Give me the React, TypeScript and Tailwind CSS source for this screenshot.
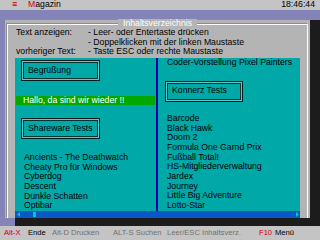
// Inhaltsverzeichnis screen of the disk magazine viewer, DOS text-mode look.
const LEFT_LIST = [
  "Ancients - The Deathwatch",
  "Cheaty Pro für Windows",
  "Cyberdog",
  "Descent",
  "Dunkle Schatten",
  "Optibar",
];

const RIGHT_LIST = [
  "Barcode",
  "Black Hawk",
  "Doom 2",
  "Formula One Garnd Prix",
  "Fußball Total!",
  "HS-Mitgliederverwaltung",
  "Jardex",
  "Journey",
  "Little Big Adventure",
  "Lotto-Star",
];

function TextButton({ label, className = "" }: { label: string; className?: string }) {
  return (
    <div
      className={`flex h-[21px] items-center border border-[#041c1c] pl-[6px] text-black shadow-[inset_0_0_0_1px_#5cc8c8,inset_0_0_0_2px_#083434] ${className}`}
    >
      {label}
    </div>
  );
}

function ScrollBar() {
  return (
    <div className="mx-[7px] flex h-[7px] items-center bg-[#0858c8]">
      <svg width="3" height="5" viewBox="0 0 3 5" className="ml-[2px]">
        <path d="M3 0 L0 2.5 L3 5 Z" fill="#00c8c8" />
      </svg>
      <div className="ml-[13px] h-[5px] w-[3px] bg-[#00c8c8]" />
      <div className="flex-1" />
      <svg width="3" height="5" viewBox="0 0 3 5" className="mr-[1px]">
        <path d="M0 0 L3 2.5 L0 5 Z" fill="#00c8c8" />
      </svg>
    </div>
  );
}

export default function App() {
  return (
    <div className="flex h-[240px] w-[320px] flex-col overflow-hidden font-['Liberation_Sans',Arial,sans-serif] text-[8.7px] leading-[9.65px] text-black">
      {/* menu line */}
      <div className="flex h-[10px] items-center bg-[#c4c4c4] pl-[12px] pr-[5px]">
        <span className="w-[16px] text-[#d00000]">≡</span>
        <span>
          <span className="text-[#d00000]">M</span>agazin
        </span>
        <span className="ml-auto">18:46:44</span>
      </div>
      <div className="h-[10px] bg-[#8484b8]" />

      {/* desktop row: window with its shadow */}
      <div className="flex h-[198px]">
        <div className="w-[5px] bg-[#8484b8]" />
        <div className="relative h-full w-[305px] bg-[#b4b4b4] px-[2px] pt-[4px]">
          <div className="relative flex h-full flex-col border-x border-t border-white shadow-[-1px_-1px_0_#8c8c8c]">
            <div className="absolute inset-x-0 top-[-6px] flex justify-center">
              <span className="bg-[#b4b4b4] px-[5px] text-white">Inhaltsverzeichnis</span>
            </div>

            <div className="pl-[8px] pt-[3px] leading-[9.5px]">
              <div className="flex">
                <span className="w-[72px]">Text anzeigen:</span>
                <span>- Leer- oder Entertaste drücken</span>
              </div>
              <div className="flex">
                <span className="w-[72px]" />
                <span>- Doppelklicken mit der linken Maustaste</span>
              </div>
              <div className="flex">
                <span className="w-[72px]">vorheriger Text:</span>
                <span>- Taste ESC oder rechte Maustaste</span>
              </div>
            </div>

            <div className="mx-[7px] mt-[1.5px] flex h-[153px] bg-[#00a8a8]">
              <div className="w-[141px]">
                <TextButton label="Begrüßung" className="ml-[6px] mt-[2px] w-[79px]" />
                <div className="mx-[1px] mt-[15px] h-[9px] bg-[#00a800] pl-[7px] leading-[9px] text-white">
                  Hallo, da sind wir wieder !!
                </div>
                <TextButton label="Shareware Tests" className="ml-[6px] mt-[13px] w-[79px]" />
                <div className="mt-[14px] pl-[9px]">
                  {LEFT_LIST.map((t) => (
                    <div key={t}>{t}</div>
                  ))}
                </div>
              </div>
              <div className="w-[2px] bg-[#0000a8]" />
              <div className="flex-1">
                <div className="pl-[9px]">Coder-Vorstellung Pixel Painters</div>
                <TextButton label="Konnerz Tests" className="ml-[7px] mt-[13px] w-[78px]" />
                <div className="mt-[12.5px] pl-[9px]">
                  {RIGHT_LIST.map((t) => (
                    <div key={t}>{t}</div>
                  ))}
                </div>
              </div>
            </div>
            <ScrollBar />
          </div>
        </div>
        <div className="flex-1 bg-[#1c1c1c]" />
      </div>

      {/* shadow under the window */}
      <div className="flex h-[8px]">
        <div className="w-[15px] bg-[#8484b8]" />
        <div className="flex-1 bg-[#1c1c1c]" />
      </div>

      {/* key help line */}
      <div className="flex h-[14px] items-center whitespace-nowrap bg-[#c4c4c4] pl-[4px] text-[7.6px]">
        <span className="w-[24px] flex-none text-[#d00000]">Alt-X</span>
        <span className="w-[24px] flex-none">Ende</span>
        <span className="w-[61px] flex-none text-[#707070]">Alt-D Drucken</span>
        <span className="w-[54px] flex-none text-[#707070]">ALT-S Suchen</span>
        <span className="w-[92px] flex-none text-[#707070]">Leer/ESC Inhaltsverz.</span>
        <span className="w-[16px] flex-none text-[#d00000]">F10</span>
        <span className="flex-none">Menü</span>
      </div>
    </div>
  );
}
